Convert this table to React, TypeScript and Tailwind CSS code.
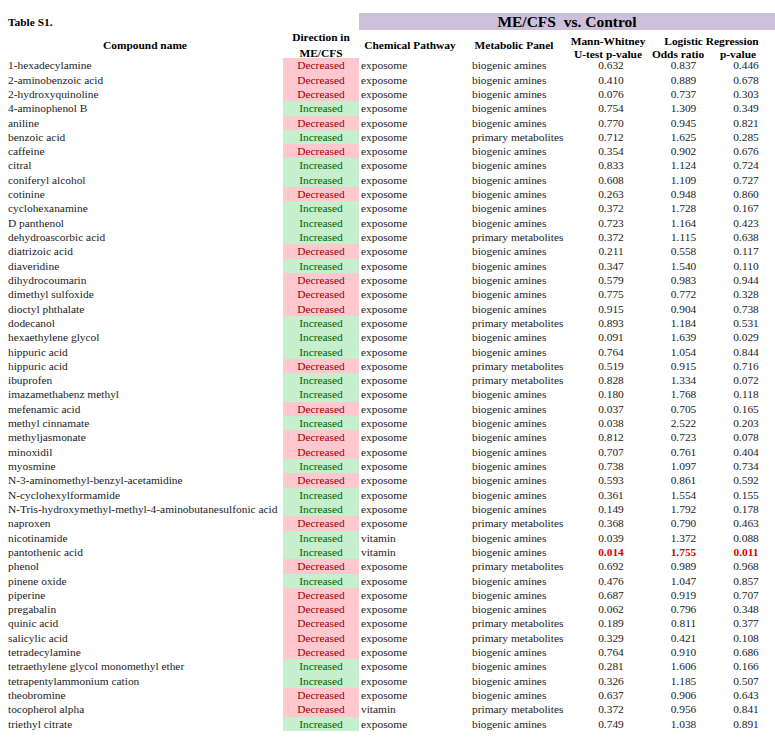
import React from "react";

type Row = [string, "D" | "I", string, string, string, string, string, boolean?];

const rows: Row[] = [
  ["1-hexadecylamine", "D", "exposome", "biogenic amines", "0.632", "0.837", "0.446"],
  ["2-aminobenzoic acid", "D", "exposome", "biogenic amines", "0.410", "0.889", "0.678"],
  ["2-hydroxyquinoline", "D", "exposome", "biogenic amines", "0.076", "0.737", "0.303"],
  ["4-aminophenol B", "I", "exposome", "biogenic amines", "0.754", "1.309", "0.349"],
  ["aniline", "D", "exposome", "biogenic amines", "0.770", "0.945", "0.821"],
  ["benzoic acid", "I", "exposome", "primary metabolites", "0.712", "1.625", "0.285"],
  ["caffeine", "D", "exposome", "biogenic amines", "0.354", "0.902", "0.676"],
  ["citral", "I", "exposome", "biogenic amines", "0.833", "1.124", "0.724"],
  ["coniferyl alcohol", "I", "exposome", "biogenic amines", "0.608", "1.109", "0.727"],
  ["cotinine", "D", "exposome", "biogenic amines", "0.263", "0.948", "0.860"],
  ["cyclohexanamine", "I", "exposome", "biogenic amines", "0.372", "1.728", "0.167"],
  ["D panthenol", "I", "exposome", "biogenic amines", "0.723", "1.164", "0.423"],
  ["dehydroascorbic acid", "I", "exposome", "primary metabolites", "0.372", "1.115", "0.638"],
  ["diatrizoic acid", "D", "exposome", "biogenic amines", "0.211", "0.558", "0.117"],
  ["diaveridine", "I", "exposome", "biogenic amines", "0.347", "1.540", "0.110"],
  ["dihydrocoumarin", "D", "exposome", "biogenic amines", "0.579", "0.983", "0.944"],
  ["dimethyl sulfoxide", "D", "exposome", "biogenic amines", "0.775", "0.772", "0.328"],
  ["dioctyl phthalate", "D", "exposome", "biogenic amines", "0.915", "0.904", "0.738"],
  ["dodecanol", "I", "exposome", "primary metabolites", "0.893", "1.184", "0.531"],
  ["hexaethylene glycol", "I", "exposome", "biogenic amines", "0.091", "1.639", "0.029"],
  ["hippuric acid", "I", "exposome", "biogenic amines", "0.764", "1.054", "0.844"],
  ["hippuric acid", "D", "exposome", "primary metabolites", "0.519", "0.915", "0.716"],
  ["ibuprofen", "I", "exposome", "primary metabolites", "0.828", "1.334", "0.072"],
  ["imazamethabenz methyl", "I", "exposome", "biogenic amines", "0.180", "1.768", "0.118"],
  ["mefenamic acid", "D", "exposome", "biogenic amines", "0.037", "0.705", "0.165"],
  ["methyl cinnamate", "I", "exposome", "biogenic amines", "0.038", "2.522", "0.203"],
  ["methyljasmonate", "D", "exposome", "biogenic amines", "0.812", "0.723", "0.078"],
  ["minoxidil", "D", "exposome", "biogenic amines", "0.707", "0.761", "0.404"],
  ["myosmine", "I", "exposome", "biogenic amines", "0.738", "1.097", "0.734"],
  ["N-3-aminomethyl-benzyl-acetamidine", "D", "exposome", "biogenic amines", "0.593", "0.861", "0.592"],
  ["N-cyclohexylformamide", "I", "exposome", "biogenic amines", "0.361", "1.554", "0.155"],
  ["N-Tris-hydroxymethyl-methyl-4-aminobutanesulfonic acid", "I", "exposome", "biogenic amines", "0.149", "1.792", "0.178"],
  ["naproxen", "D", "exposome", "primary metabolites", "0.368", "0.790", "0.463"],
  ["nicotinamide", "I", "vitamin", "biogenic amines", "0.039", "1.372", "0.088"],
  ["pantothenic acid", "I", "vitamin", "biogenic amines", "0.014", "1.755", "0.011", true],
  ["phenol", "D", "exposome", "primary metabolites", "0.692", "0.989", "0.968"],
  ["pinene oxide", "I", "exposome", "biogenic amines", "0.476", "1.047", "0.857"],
  ["piperine", "D", "exposome", "biogenic amines", "0.687", "0.919", "0.707"],
  ["pregabalin", "D", "exposome", "biogenic amines", "0.062", "0.796", "0.348"],
  ["quinic acid", "D", "exposome", "primary metabolites", "0.189", "0.811", "0.377"],
  ["salicylic acid", "D", "exposome", "primary metabolites", "0.329", "0.421", "0.108"],
  ["tetradecylamine", "D", "exposome", "biogenic amines", "0.764", "0.910", "0.686"],
  ["tetraethylene glycol monomethyl ether", "I", "exposome", "biogenic amines", "0.281", "1.606", "0.166"],
  ["tetrapentylammonium cation", "I", "exposome", "biogenic amines", "0.326", "1.185", "0.507"],
  ["theobromine", "D", "exposome", "biogenic amines", "0.637", "0.906", "0.643"],
  ["tocopherol alpha", "D", "vitamin", "primary metabolites", "0.372", "0.956", "0.841"],
  ["triethyl citrate", "I", "exposome", "biogenic amines", "0.749", "1.038", "0.891"],
];

const cols = "grid grid-cols-[283px_76px_111px_94px_84px_60px_67px]";

export default function App() {
  return (
    <div
      className="w-[775px] h-[739px] bg-white text-[#1c1c1c] text-[11.4px] overflow-hidden"
      style={{ fontFamily: '"Liberation Serif", "Times New Roman", serif' }}
    >
      <div className="pt-[13.3px]">
        {/* band row */}
        <div className={`${cols} h-[16px]`}>
          <div className="pl-[8px] font-bold leading-[16px] pt-[1px] text-black">Table S1.</div>
          <div />
          <div className="col-span-5 bg-[#ccc0da] flex items-center justify-center font-bold text-[15.5px] leading-[16px] text-black">
            ME/CFS&nbsp;&nbsp;vs. Control
          </div>
        </div>
        {/* header row */}
        <div className={`${cols} h-[29px] font-bold text-black`}>
          <div className="flex items-center justify-center pl-[7px] leading-[14px]">Compound name</div>
          <div className="flex flex-col items-center justify-center leading-[15.5px] pt-[1px]">
            <span>Direction in</span>
            <span>ME/CFS</span>
          </div>
          <div className="flex items-center justify-center pr-[9px]">Chemical Pathway</div>
          <div className="flex items-center justify-center pr-[6px]">Metabolic Panel</div>
          <div className="flex flex-col items-center justify-end leading-[13px] pl-[4px]">
            <span>Mann-Whitney</span>
            <span>U-test p-value</span>
          </div>
          <div className="col-span-2 flex flex-col justify-end leading-[13px]">
            <div className="text-center">Logistic Regression</div>
            <div className="grid grid-cols-[60px_67px]">
              <span className="text-center">Odds ratio</span>
              <span className="text-center pr-[7px]">p-value</span>
            </div>
          </div>
        </div>
        {/* body */}
        {rows.map((r, i) => {
          const dec = r[1] === "D";
          const hi = r[7];
          return (
            <div key={i} className={`${cols} h-[14.32px] leading-[14.32px]`}>
              <div className="pl-[8px] whitespace-nowrap">{r[0]}</div>
              <div
                className={
                  dec
                    ? "bg-[#ffc7ce] text-[#9c0006] text-center"
                    : "bg-[#c6efce] text-[#006100] text-center"
                }
              >
                {dec ? "Decreased" : "Increased"}
              </div>
              <div className="pl-[2px]">{r[2]}</div>
              <div className="pl-[2px] whitespace-nowrap">{r[3]}</div>
              <div className={hi ? "pl-[10px] text-center font-bold text-[#dd0000]" : "pl-[10px] text-center"}>{r[4]}</div>
              <div className={hi ? "pl-[11px] text-center font-bold text-[#dd0000]" : "pl-[11px] text-center"}>{r[5]}</div>
              <div className={hi ? "pl-[9px] text-center font-bold text-[#dd0000]" : "pl-[9px] text-center"}>{r[6]}</div>
            </div>
          );
        })}
      </div>
    </div>
  );
}
